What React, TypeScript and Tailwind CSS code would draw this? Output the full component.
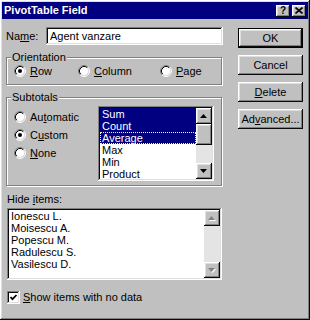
import React from "react";

const raised =
  "shadow-[inset_-1px_-1px_#0a0a0a,inset_1px_1px_#ffffff,inset_-2px_-2px_#808080,inset_2px_2px_#dfdfdf]";
const sunken =
  "shadow-[inset_-1px_-1px_#ffffff,inset_1px_1px_#808080,inset_-2px_-2px_#dfdfdf,inset_2px_2px_#0a0a0a]";
const etched = "border border-[#808080] shadow-[inset_1px_1px_#ffffff,1px_1px_#ffffff]";

function Radio({ checked }: { checked?: boolean }) {
  return (
    <svg width="12" height="12" viewBox="0 0 12 12" className="shrink-0">
      <circle cx="6" cy="6" r="4.5" fill="#fff" />
      <path d="M2.11 9.89A5.5 5.5 0 0 1 9.89 2.11" fill="none" stroke="#808080" />
      <path d="M9.89 2.11A5.5 5.5 0 0 1 2.11 9.89" fill="none" stroke="#fff" />
      <path d="M2.82 9.18A4.5 4.5 0 0 1 9.18 2.82" fill="none" stroke="#000" />
      <path d="M9.18 2.82A4.5 4.5 0 0 1 2.82 9.18" fill="none" stroke="#dfdfdf" />
      {checked && <circle cx="6" cy="6" r="2" fill="#000" />}
    </svg>
  );
}

function RadioItem({ label, u, checked }: { label: React.ReactNode; u?: string; checked?: boolean }) {
  return (
    <div className="flex items-center gap-[4px] h-[18px]">
      <Radio checked={checked} />
      <span>{label}</span>
    </div>
  );
}

function Arrow({ up, disabled }: { up?: boolean; disabled?: boolean }) {
  const pts = up ? "3.5,0 7,4 0,4" : "0,0 7,0 3.5,4";
  return (
    <div className={`w-[16px] h-[16px] bg-[#c0c0c0] flex items-center justify-center shrink-0 ${raised}`}>
      <svg width="8" height="5" viewBox="0 0 8 5">
        {disabled && <polygon points={pts} fill="#fff" transform="translate(1,1)" />}
        <polygon points={pts} fill={disabled ? "#808080" : "#000"} />
      </svg>
    </div>
  );
}

function Btn({ children, def }: { children: React.ReactNode; def?: boolean }) {
  return (
    <div className={def ? "border border-black" : ""}>
      <div
        className={`bg-[#c0c0c0] flex items-center justify-center ${raised} ${def ? "h-[18px]" : "h-[20px]"}`}
      >
        {children}
      </div>
    </div>
  );
}

export default function App() {
  const subtotals = ["Sum", "Count", "Average", "Max", "Min", "Product"];
  const items = ["Ionescu L.", "Moisescu A.", "Popescu M.", "Radulescu S.", "Vasilescu D."];

  return (
    <div
      className={`w-[310px] h-[320px] bg-[#c0c0c0] p-[2px] flex flex-col text-[11px] text-black font-['Liberation_Sans',Arial,sans-serif] ${raised}`}
    >
      {/* title bar */}
      <div className="h-[17px] bg-[#000080] flex items-center pl-[2px] pr-[2px]">
        <span className="flex-1 text-white font-bold leading-none">PivotTable Field</span>
        <div className="flex gap-[2px]">
          <div className={`w-[14px] h-[12px] bg-[#c0c0c0] flex items-center justify-center font-bold text-[10px] leading-none ${raised}`}>
            ?
          </div>
          <div className={`w-[14px] h-[12px] bg-[#c0c0c0] flex items-center justify-center ${raised}`}>
            <svg width="8" height="7" viewBox="0 0 8 7">
              <path d="M0.5 0.5L7.5 6.5M7.5 0.5L0.5 6.5" stroke="#000" strokeWidth="1.6" />
            </svg>
          </div>
        </div>
      </div>

      <div className="flex pt-[8px] pl-[4px]">
        {/* left column */}
        <div className="w-[217px] flex flex-col">
          <div className="flex items-center h-[18px]">
            <span className="w-[40px]">
              Na<u>m</u>e:
            </span>
            <div className={`flex-1 h-[18px] bg-white flex items-center px-[4px] ${sunken}`}>Agent vanzare</div>
          </div>

          {/* Orientation */}
          <div className="flex flex-col mt-[6px] w-[216px]">
            <span className="relative z-10 self-start ml-[5px] px-[1px] bg-[#c0c0c0] leading-[13px]">Orientation</span>
            <div className={`-mt-[7px] h-[28px] ${etched} flex items-center pl-[7px]`}>
              <div className="w-[64px] flex">
                <RadioItem checked label={<><u>R</u>ow</>} />
              </div>
              <div className="w-[82px] flex">
                <RadioItem label={<><u>C</u>olumn</>} />
              </div>
              <RadioItem label={<><u>P</u>age</>} />
            </div>
          </div>

          {/* Subtotals */}
          <div className="flex flex-col mt-[6px] w-[216px]">
            <span className="relative z-10 self-start ml-[5px] px-[1px] bg-[#c0c0c0] leading-[13px]">Subtotals</span>
            <div className={`-mt-[7px] h-[89px] ${etched} flex items-start pl-[7px]`}>
              <div className="w-[84px] flex flex-col pt-[10px]">
                <RadioItem label={<>Au<u>t</u>omatic</>} />
                <RadioItem checked label={<>C<u>u</u>stom</>} />
                <RadioItem label={<><u>N</u>one</>} />
              </div>
              <div className={`mt-[8px] w-[116px] h-[75px] bg-white p-[2px] flex ${sunken}`}>
                <div className="flex-1 flex flex-col overflow-hidden">
                  {subtotals.map((s, i) => (
                    <div
                      key={s}
                      className={`h-[12px] leading-[12px] pl-[2px] shrink-0 ${
                        i < 3 ? "bg-[#000080] text-white" : ""
                      } ${i === 2 ? "outline outline-1 outline-dotted outline-[#ffff80] -outline-offset-1" : ""}`}
                    >
                      {s}
                    </div>
                  ))}
                </div>
                <div className="w-[16px] flex flex-col bg-[#e4e4e4]">
                  <Arrow up />
                  <div className={`h-[21px] bg-[#c0c0c0] ${raised}`} />
                  <div className="flex-1" />
                  <Arrow />
                </div>
              </div>
            </div>
          </div>

          {/* Hide items */}
          <span className="mt-[7px] leading-[13px] pl-[1px]">
            Hide <u>i</u>tems:
          </span>
          <div className={`mt-[2px] ml-[1px] w-[215px] h-[72px] bg-white p-[2px] flex ${sunken}`}>
            <div className="flex-1 flex flex-col">
              {items.map((s) => (
                <div key={s} className="h-[12px] leading-[12px] pl-[2px]">
                  {s}
                </div>
              ))}
            </div>
            <div className="w-[16px] flex flex-col bg-[#e4e4e4]">
              <Arrow up disabled />
              <div className="flex-1" />
              <Arrow disabled />
            </div>
          </div>

          {/* checkbox */}
          <div className="mt-[11px] ml-[1px] flex items-center gap-[3px] h-[13px]">
            <div className={`w-[13px] h-[13px] bg-white flex items-center justify-center ${sunken}`}>
              <svg width="9" height="9" viewBox="0 0 9 9">
                <path d="M1.5 4L3.5 6.2L7.5 2" fill="none" stroke="#000" strokeWidth="1.8" />
              </svg>
            </div>
            <span>
              <u>S</u>how items with no data
            </span>
          </div>
        </div>

        {/* right column */}
        <div className="ml-[15px] w-[65px] mt-[1px] flex flex-col gap-[7px]">
          <Btn def>OK</Btn>
          <Btn>Cancel</Btn>
          <Btn>
            <u>D</u>elete
          </Btn>
          <Btn>
            Ad<u>v</u>anced...
          </Btn>
        </div>
      </div>
    </div>
  );
}
